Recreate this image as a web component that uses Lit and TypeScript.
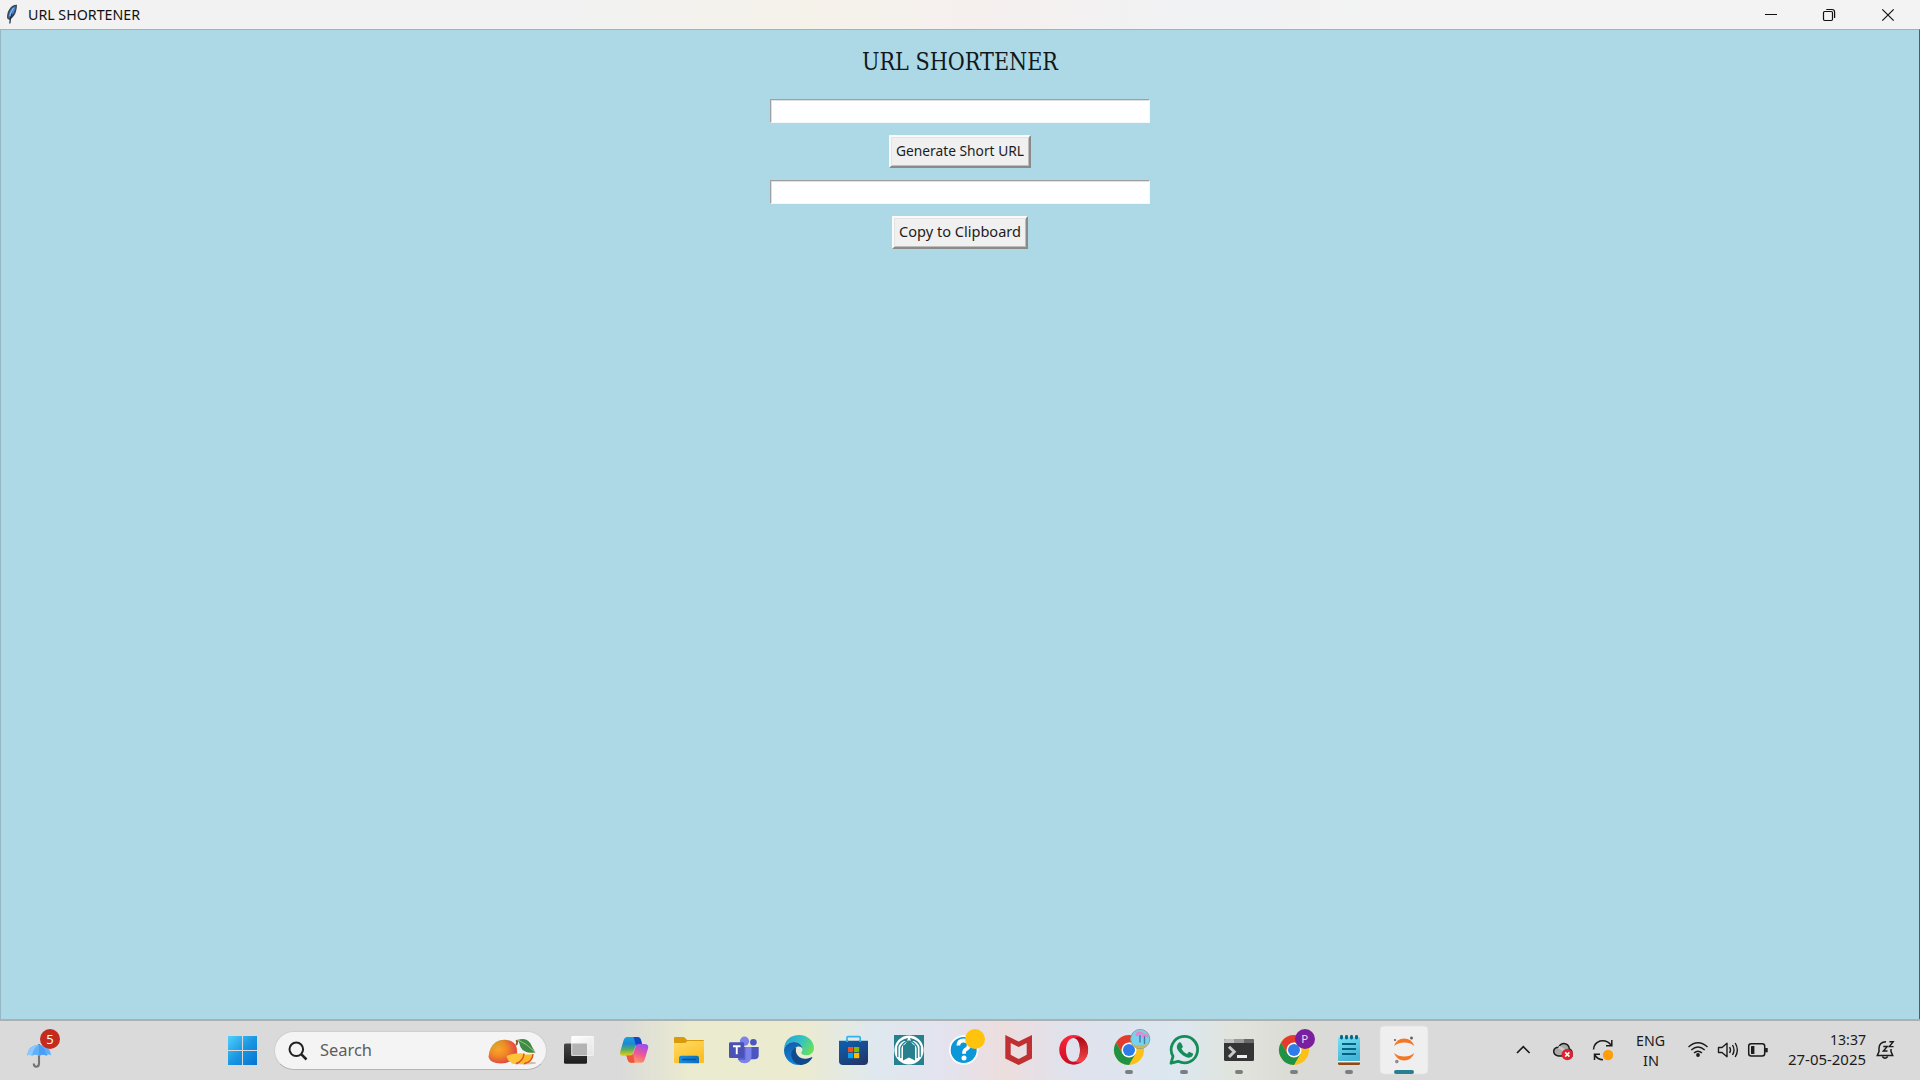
import { LitElement, html, css, svg } from "lit";
import { customElement, property } from "lit/decorators.js";

/** A single line of text that is condensed or stretched to a given width. */
@customElement("fit-label")
class FitLabel extends LitElement {
  @property({ type: Number }) width = 0;
  static styles = css`
    :host { display: block; white-space: nowrap; }
    .text { display: inline-block; transform-origin: 0 50%; }
  `;
  updated() {
    this.style.width = this.width + "px";
    const el = this.renderRoot.querySelector(".text") as HTMLElement;
    el.style.transform = "none";
    const natural = el.getBoundingClientRect().width;
    if (natural > 0) el.style.transform = `scaleX(${this.width / natural})`;
  }
  render() {
    return html`<span class="text"><slot></slot></span>`;
  }
}

const chrome = svg`
  <circle cx="28" cy="30" r="15" fill="#fbc116"/>
  <path d="M28 30 L15 22.5 A15 15 0 0 1 41 22.5 L28 22.5 Z" fill="#e33b2e"/>
  <path d="M15 22.5 L21.5 33.7 L28 30 L28 22.5 Z" fill="#e33b2e"/>
  <path d="M15 22.5 A15 15 0 0 0 28 45 L34.5 33.7 L28 36 L21.5 33.7 Z" fill="#1f9246"/>
  <circle cx="28" cy="30" r="7.5" fill="#fff"/><circle cx="28" cy="30" r="6" fill="#2e7bea"/>`;
const running = svg`<rect x="24" y="50" width="8" height="4" rx="2" fill="#7c7f81"/>`;

const apps = [
  // task view
  svg`<rect x="13" y="23.5" width="23" height="20.3" rx="1.5" fill="url(#tv1)"/>
    <rect x="20.3" y="16" width="22.5" height="20" rx="1.2" fill="url(#tv2)"/>
    <rect x="20.3" y="23.5" width="15.7" height="12.5" fill="#adadad" opacity=".9"/>
    <rect x="20.8" y="16.5" width="21.5" height="19" rx="1" fill="none" stroke="#fff" stroke-opacity=".5"/>
    <defs><linearGradient id="tv1" x2="0" y2="1"><stop stop-color="#484848"/><stop offset="1" stop-color="#1c1c1c"/></linearGradient>
    <linearGradient id="tv2" x2="1" y2="1"><stop stop-color="#fff"/><stop offset="1" stop-color="#e4e4e4"/></linearGradient></defs>`,
  // copilot
  svg`<path d="M21 17 H31.5 Q34 17 35 20 L36 24 H33 Q30 24 29 27.5 L26.5 34 Q25.5 36 23 36 H18 Q13 36 14.3 31.5 L17.5 20.5 Q18.6 17 21 17 Z" fill="url(#cp1)"/>
    <path d="M35.3 42.7 H25 Q22.5 42.7 21.5 39.5 L20.4 35.6 H24 Q26.7 35.6 27.7 32 L29.8 26 Q30.6 24 33 24 H38.3 Q43.3 24 42 28.5 L38.8 39.2 Q37.7 42.7 35.3 42.7 Z" fill="url(#cp2)"/>
    <path d="M27.5 17 H31.5 Q34 17 35 20 L36 24 H33 Q31 24 30 25.5 Z" fill="#1447c8"/>
    <path d="M28.8 42.7 H25 Q22.5 42.7 21.5 39.5 L20.4 35.6 H24 Q26 35.6 27 34 Z" fill="#ee573c"/>
    <defs><linearGradient id="cp1" x2="0" y2="1"><stop stop-color="#12a5e4"/><stop offset=".35" stop-color="#1e88d4"/><stop offset=".65" stop-color="#53ad63"/><stop offset="1" stop-color="#f5cf12"/></linearGradient>
    <linearGradient id="cp2" x1=".7" x2=".3" y2="1"><stop stop-color="#9a50ee"/><stop offset=".5" stop-color="#ee5795"/><stop offset="1" stop-color="#ffa25c"/></linearGradient></defs>`,
  // file explorer
  svg`<path d="M13 18.3 Q13 17 14.3 17 H22 Q23.3 17 24.2 18 L26 20 H42 Q43 20 43 21 V26 H13 Z" fill="#d99a0b"/>
    <path d="M13 23 H23 Q24.6 23 25.6 22 L26.4 21 H43 V42 Q43 43 42 43 H14 Q13 43 13 42 Z" fill="url(#fe1)"/>
    <path d="M18 43.3 V38 Q18 35.7 20.3 35.7 H35.7 Q38 35.7 38 38 V43.3 Z" fill="url(#fe2)"/>
    <rect x="21" y="38.8" width="14" height="1.5" rx=".7" fill="#0b4f8e"/>
    <defs><linearGradient id="fe1" x2=".5" y2="1"><stop stop-color="#ffdc66"/><stop offset="1" stop-color="#fdbd23"/></linearGradient>
    <linearGradient id="fe2" x2="1"><stop stop-color="#178ee0"/><stop offset="1" stop-color="#0f6dbd"/></linearGradient></defs>`,
  // teams
  svg`<circle cx="37.4" cy="22.3" r="3.3" fill="#4d55c0"/><path d="M34 27 H42.7 V35 Q42.7 39.3 38.5 39.3 H34 Z" fill="#4d55c0"/>
    <circle cx="28.5" cy="21.2" r="4.6" fill="#7b83eb"/><path d="M21.5 27 H35.5 V36 Q35.5 43.3 28.5 43.3 Q21.5 43.3 21.5 36 Z" fill="#7b83eb"/>
    <path d="M21.5 27 H29.5 V39 Q29.5 40 28.5 40 H22.5 Z" fill="#5b62cf"/>
    <rect x="13" y="22.2" width="15.2" height="15.8" rx="1.3" fill="#4a52b5"/>
    <path d="M17 26.3 H24.5 M20.75 26.3 V34.3" stroke="#fff" stroke-width="1.9" fill="none"/>`,
  // edge
  svg`<path d="M13 30 C13 20 20 15 28 15 C37 15 43 21.5 43 28 C43 32.5 39.5 35.3 35.5 35.3 C32 35.3 30.3 34 30.3 33 C30.3 32 31.5 31.5 31.5 29 C31.5 25.5 28 22 23 22 C17.5 22 14 25.5 13 30 Z" fill="url(#ed1)"/>
    <path d="M13 30 C14 25 18 22 23 22 C28 22 31.5 25.5 31.5 29 C30.5 27 28.8 26.4 27 26.6 C23 27.5 21 31 21.5 35 C22 40 25.5 44 29 45 C20 45.5 13 39 13 30 Z" fill="url(#ed2)"/>
    <path d="M25.2 27.4 C24 31 25.5 38 33.5 38.7 C37 39 39.5 37.7 41 37 Q41.6 37 41.2 38 C38.5 42.5 34 45 29 45 C24.5 44.5 20 39.5 20.3 34 C20.5 31 22.5 28 25.2 27.4 Z" fill="#114a8b"/>
    <defs><linearGradient id="ed1" y1=".2" x2="1" y2=".6"><stop stop-color="#22a4dc"/><stop offset=".5" stop-color="#32c1c5"/><stop offset="1" stop-color="#69e05a"/></linearGradient>
    <linearGradient id="ed2" x2=".3" y2="1"><stop stop-color="#0f5ba5"/><stop offset="1" stop-color="#1283da"/></linearGradient></defs>`,
  // store
  svg`<path d="M21 23 V17.6 Q21 16.6 22 16.6 H33.2 Q34.2 16.6 34.2 17.6 V23" fill="none" stroke="#2fb4f0" stroke-width="1.7"/>
    <path d="M13 20.7 H42 V41 Q42 45 38 45 H17 Q13 45 13 41 Z" fill="url(#st1)"/>
    <path d="M21 20.7 V22 M34.2 20.7 V22" stroke="#2fb4f0" stroke-width="1.7"/>
    <rect x="22" y="27" width="5.2" height="5.2" fill="#f25022"/><rect x="28" y="27" width="5.2" height="5.2" fill="#7fba00"/>
    <rect x="22" y="33" width="5.2" height="5.2" fill="#00a4ef"/><rect x="28" y="33" width="5.2" height="5.2" fill="#ffb900"/>
    <defs><linearGradient id="st1" x2=".6" y2="1"><stop stop-color="#0b62b3"/><stop offset="1" stop-color="#21386f"/></linearGradient></defs>`,
  // arch emblem
  svg`<rect x="13" y="15" width="30" height="30" fill="#26808e"/><circle cx="28" cy="30" r="14.6" fill="#fff"/>
    <path d="M22 40.5 V25.5 Q25 24.5 26.5 20.5 H29.5 Q31 24.5 34 25.5 V40.5 L28 37.5 Z" fill="#26808e"/>
    <path d="M16.8 37 V26.5 Q18.5 21 26 19 L25.3 21.5 Q20.5 24.5 19.8 28 V38 M39.2 37 V26.5 Q37.5 21 30 19 L30.7 21.5 Q35.5 24.5 36.2 28 V38" fill="none" stroke="#26808e" stroke-width="1.3"/>`,
  // help
  svg`<circle cx="27.7" cy="30" r="14.7" fill="#fff"/><circle cx="27.7" cy="30" r="13" fill="#0b97d8"/>
    <path d="M22.3 25.5 Q22.5 20.5 27.5 20.5 Q32.8 20.5 32.8 25 Q32.8 28 29.6 29.6 Q28 30.5 28 33.8" fill="none" stroke="#fff" stroke-width="3.8"/>
    <circle cx="28" cy="38" r="2.5" fill="#fff"/><circle cx="39" cy="19" r="10" fill="#ffc20d"/>`,
  // shield
  svg`<path d="M14.3 15 L27.7 21.5 L41 15 V38.5 L27.7 45 L14.3 38.5 Z M19.7 23 V34.8 L27.7 39 L35.7 34.8 V23 L27.7 27 Z" fill="#c02f31" fill-rule="evenodd"/>`,
  // opera
  svg`<path d="M27.7 15 A14.4 14.8 0 1 0 27.7 44.7 A14.4 14.8 0 1 0 27.7 15 Z M27.7 18 C31.5 18 34 23 34 30 C34 37 31.5 41.8 27.7 41.8 C23 41.8 20 37 20 30 C20 23 23 18 27.7 18 Z" fill="url(#op1)" fill-rule="evenodd"/>
    <path d="M27.7 18 C32 16.5 36 17.5 38 19.5 C43.4 25 43.4 35 38 40.5 C36 42.5 31.5 43 27.7 41.8 C31.5 41.8 34 37 34 30 C34 23 31.5 18 27.7 18 Z" fill="url(#op2)"/>
    <defs><linearGradient id="op1" x2="0" y2="1"><stop stop-color="#ff2638"/><stop offset="1" stop-color="#c80d25"/></linearGradient>
    <linearGradient id="op2" x2="0" y2="1"><stop stop-color="#a90a18"/><stop offset="1" stop-color="#f8474b"/></linearGradient></defs>`,
  // chrome, first profile
  svg`${chrome}<circle cx="39.2" cy="19" r="9.6" fill="#79d1ee" stroke="#8a9a88" stroke-width=".9"/>
    <path d="M31 24.5 Q39 26 47.4 24 Q44.5 28.3 39 28.3 Q33.5 28.3 31 24.5 Z" fill="#c3b963"/>
    <path d="M39 15 V22.5 M43.5 16 V24" stroke="#427ba6" stroke-width="1.4"/>
    <path d="M34.3 14.5 Q36 10.3 39.5 11.8 Q42.5 12 43 14.5 L39 14.2 L35.5 16.5 Z M40.5 16.5 Q42.5 12.3 45.5 14 Q47.5 15 47.3 18 L44 16 L41 18 Z" fill="#ef7fd0"/>${running}`,
  // whatsapp
  svg`<path d="M15 43.2 L17 36.3 A13.2 13.2 0 1 1 22.2 41.3 Z" fill="none" stroke="#168c58" stroke-width="2.8" stroke-linejoin="round"/>
    <path d="M22 23.4 Q23.6 21.6 25 22.7 L26.8 26.2 Q27 27.2 25.4 28.8 Q27.3 32.4 31 34 L33 31.8 L37 33.6 Q37.3 35 36 36.6 Q33.5 38.7 29.4 36.8 Q23.5 34 21 28.6 Q20.2 25.6 22 23.4 Z" fill="#168c58"/>${running}`,
  // terminal
  svg`<rect x="13" y="19" width="30" height="22" rx="1.5" fill="#353535"/>
    <path d="M14.5 19 H23 V23 H13 V20.5 Q13 19 14.5 19 Z" fill="#c2c2c2"/><rect x="23" y="19" width="10" height="4" fill="#999"/>
    <path d="M33 19 H41.5 Q43 19 43 20.5 V23 H33 Z" fill="#686868"/>
    <path d="M18 26.7 L23.2 31.8 L18 37" fill="none" stroke="#c9c9c9" stroke-width="3"/><rect x="26" y="35" width="10" height="3" fill="#eee"/>${running}`,
  // chrome, second profile
  svg`${chrome}<circle cx="39" cy="19" r="10" fill="#7a1fa0"/>
    <text x="38.8" y="23" text-anchor="middle" font-size="11.5" fill="#eadcf2">P</text>${running}`,
  // notepad
  svg`<path d="M17 40 H39 V43.5 Q39 45 37.5 45 H18.5 Q17 45 17 43.5 Z" fill="#8d4a15"/><rect x="17" y="40" width="22" height="2.4" fill="#fff"/>
    <path d="M17 18.5 Q17 17.3 18.2 17.3 H37.8 Q39 17.3 39 18.5 V41 H17 Z" fill="url(#np1)"/>
    <path d="M21 24 H35 M21 29 H35 M21 34 H35" stroke="#03637f" stroke-width="1.8"/>
    <g fill="#036683"><rect x="19" y="15" width="3" height="4.4" rx="1.4"/><rect x="24" y="15" width="3" height="4.4" rx="1.4"/><rect x="29" y="15" width="3" height="4.4" rx="1.4"/><rect x="34" y="15" width="3" height="4.4" rx="1.4"/></g>
    ${running}<defs><linearGradient id="np1" x2=".4" y2="1"><stop stop-color="#79e0f4"/><stop offset="1" stop-color="#43b5d8"/></linearGradient></defs>`,
  // jupyter
  svg`<rect x="4" y="6" width="48" height="48" rx="4" fill="#efefef" stroke="#e2e2e2" stroke-width=".8"/>
    <path d="M18 26 Q21 18.6 28.2 18.6 Q35.3 18.6 38.4 26 Q34 22.6 28.2 22.6 Q22.5 22.6 18 26 Z M18 33 Q21 40.4 28.2 40.4 Q35.3 40.4 38.4 33 Q34 36.6 28.2 36.6 Q22.5 36.6 18 33 Z" fill="#f37726"/>
    <circle cx="35.5" cy="18" r="1.5" fill="#616262"/><circle cx="19" cy="20" r="1.1" fill="#616262"/><circle cx="20.8" cy="41.6" r="1.8" fill="#8c8c8c"/>
    <rect x="18" y="50" width="20" height="4" rx="2" fill="#27808f"/>`,
];

@customElement("app-root")
class AppRoot extends LitElement {
  static styles = css`
    :host { display: block; width: 1920px; height: 1080px; overflow: hidden;
      font-family: "Noto Sans", "Open Sans", sans-serif; color: #111; }
    * { box-sizing: border-box; }
    svg { display: block; flex: none; }
    .screen { display: flex; flex-direction: column; height: 1080px; }
    .titlebar { height: 29px; flex: none; display: flex; align-items: center;
      background: linear-gradient(90deg, #f2f2f2 30%, #f5f2ea 42%, #f5f0ef 52%, #f1f2f4 62%, #f3f3f3 72%); }
    .feather { margin-left: 5px; margin-right: 10px; }
    .caption { font-size: 15px; line-height: 26px; height: 28px; }
    .controls { margin-left: auto; }
    .window { flex: 1; background: #add8e6; border: 1px solid #93b7c3; border-right-color: #47606a; border-bottom: 0;
      display: flex; flex-direction: column; align-items: center; gap: 12px; }
    .heading { height: 57px; padding-top: 12px; margin-right: 1px; font: 24.5px/39px "DejaVu Serif Condensed", "DejaVu Serif", serif; color: #10181b; }
    .entry { width: 380px; height: 24px; background: #fff; border: 1px solid #a0a0a0; border-right-color: #f4f8fa;
      border-bottom-color: #f4f8fa; box-shadow: inset 1px 1px #dfdfdf; }
    .button { height: 33px; padding: 0 5px; background: #f0f0f0; border: 2px solid; border-color: #fafafa #8a8a8a #8a8a8a #fafafa;
      box-shadow: inset 1px 1px #e3e3e3, inset -1px -1px #bdbdbd; font: 15px/27px "Noto Sans", sans-serif; color: #1c1c1c; }
    .button.generate { margin-right: 1px; }
    .taskbar { height: 61px; flex: none; border-top: 2px solid #acb0b1; display: flex; align-items: center;
      background: linear-gradient(90deg, #dadada 620px, #ebebcf 690px, #ecebcf 800px, #dfe8ee 872px, #e3e3ee 945px,
        #eddddd 1004px, #e0e2ec 1065px, #dce7f0 1180px, #e1e4dc 1235px, #dbdad6 1300px, #dadada 1350px); }
    .weather { margin-left: 24px; margin-right: 142px; margin-top: -2px; position: relative; }
    .weather .count { position: absolute; left: 16px; top: -2px; width: 20px; height: 20px; border-radius: 50%;
      background: #c42b1c; color: #fff; font-size: 13px; line-height: 20px; text-align: center; }
    .start { margin-right: 18px; }
    .search { width: 273px; height: 39px; margin-left: -1px; margin-right: 4px; border-radius: 20px; background: #f4f4f4; border: 1px solid #cfcfcf;
      border-bottom-color: #b4b4b4; display: flex; align-items: center; padding: 0 10px 0 13px; }
    .search fit-label { font-size: 17px; line-height: 34px; height: 36px; color: #5d5d5d; margin-left: 12px; margin-right: auto; }
    .apps { display: flex; margin-top: -1px; }
    .tray { margin-left: auto; display: flex; align-items: center; height: 59px; }
    .lines { font-size: 15px; line-height: 20px; color: #1b1b1b; display: flex; flex-direction: column; padding-bottom: 3px; }
    .lang { align-items: center; margin-left: 23px; margin-right: 22px; padding-bottom: 2px; }
    .clock { align-items: flex-end; margin-left: 19px; margin-right: 10px; }
    .bell { margin-right: 24px; }
  `;

  render() {
    return html`<div class="screen">
      <header class="titlebar">
        <svg class="feather" width="13" height="21" viewBox="0 0 13 21">
          <path d="M12 .8 Q7.5.5 4.5 5 Q1.5 9 2.2 14.5 L4.5 16 Q9.5 13 11 7.5 Q12 4 12 .8 Z" fill="#39424d"/>
          <path d="M10.5 2 Q7 3 5.2 6.5 Q3.2 10 3.4 14 L5 13.5 Q8.5 10.5 9.6 7 Q10.6 4.5 10.5 2 Z" fill="#4584d6"/>
          <path d="M7 9.5 Q5 14 4.8 19.5" fill="none" stroke="#283346" stroke-width="1.3"/>
          <path d="M8.5 4 Q5.8 7.5 4.8 12" fill="none" stroke="#9cc4f2" stroke-width="1"/>
        </svg>
        <fit-label class="caption" width="112">URL SHORTENER</fit-label>
        <svg class="controls" width="170" height="28" viewBox="1750 0 170 28" fill="none" stroke="#111">
          <path d="M1765 13.5 H1777"/>
          <rect x="1823.5" y="10.5" width="9" height="9" rx="1.2" stroke-width="1.2"/>
          <path d="M1826.3 8.5 H1832 Q1834.6 8.5 1834.6 11.2 V17" stroke-width="1.2"/>
          <path d="M1882.3 8.3 L1893.7 19.7 M1893.7 8.3 L1882.3 19.7" stroke-width="1.2"/>
        </svg>
      </header>
      <main class="window">
        <div class="heading"><fit-label width="196">URL SHORTENER</fit-label></div>
        <div class="entry"></div>
        <div class="button generate"><fit-label width="128">Generate Short URL</fit-label></div>
        <div class="entry"></div>
        <div class="button"><fit-label width="122">Copy to Clipboard</fit-label></div>
      </main>
      <footer class="taskbar">
        <div class="weather">
          <svg width="38" height="38" viewBox="24 1028 38 38">
            <path d="M39 1041 V1060.5 Q39 1063.7 36.3 1063.7 Q33.8 1063.7 33.8 1060.5" fill="none" stroke="#747474" stroke-width="2.1"/>
            <path d="M27 1052.5 Q28.5 1042 39 1041.5 Q49.5 1042 51.3 1052.5 Q48.5 1050.5 46.5 1052.8 Q43 1050.5 39 1053 Q35.5 1050.5 32 1052.8 Q29.5 1050.8 27 1052.5 Z" fill="#5eb0fb"/>
            <path d="M27 1052.5 Q28.5 1042 39 1041.5 Q33.5 1044.5 32 1052.8 Q29.5 1050.8 27 1052.5 Z" fill="#8bc8fe"/>
            <path d="M39 1041.5 Q46 1045 46.5 1052.8 Q43 1050.5 39 1053 Z" fill="#4a9ff4"/>
          </svg>
          <span class="count">5</span>
        </div>
        <svg class="start" width="53" height="30" viewBox="204 1036 53 30">
          <defs><linearGradient id="w" gradientUnits="userSpaceOnUse" x1="228" y1="1036" x2="257" y2="1065">
            <stop stop-color="#4fd0fd"/><stop offset=".5" stop-color="#1b96e2"/><stop offset="1" stop-color="#0474d3"/></linearGradient></defs>
          <path d="M228 1036 H242 V1050 H228 Z M243 1036 H257 V1050 H243 Z M228 1051 H242 V1065 H228 Z M243 1051 H257 V1065 H243 Z" fill="url(#w)"/>
        </svg>
        <div class="search">
          <svg width="20" height="20" viewBox="0 0 20 20" fill="none" stroke="#222">
            <circle cx="8.3" cy="8.3" r="6.8" stroke-width="2"/><path d="M13.2 13.2 L18.5 18.5" stroke-width="2.5"/></svg>
          <fit-label width="52">Search</fit-label>
          <svg width="50" height="28" viewBox="486 1037 50 28">
            <defs><radialGradient id="mg" cx=".35" cy=".4" r=".75"><stop stop-color="#f9a52a"/><stop offset=".4" stop-color="#f08a24"/><stop offset=".8" stop-color="#e24a45"/><stop offset="1" stop-color="#d97a22"/></radialGradient>
            <linearGradient id="mg2" x2=".6" y2=".8"><stop stop-color="#a6bf2e"/><stop offset=".5" stop-color="#b9b52e" stop-opacity="0"/></linearGradient></defs>
            <ellipse cx="524" cy="1063" rx="13" ry="1.5" fill="#cdbfb0"/>
            <path d="M488.5 1057 Q489 1047 496 1042 Q503 1038 511 1041 Q518 1044 517 1054 Q513 1063 501 1063.5 Q490 1063 488.5 1057 Z" fill="url(#mg)"/>
            <path d="M488.5 1057 Q489 1047 496 1042 Q503 1038 511 1041 Q518 1044 517 1054 Q513 1063 501 1063.5 Q490 1063 488.5 1057 Z" fill="url(#mg2)"/>
            <path d="M516 1045 Q518 1043 516.5 1040" stroke="#8a5526" stroke-width="1.8" fill="none"/>
            <path d="M517.5 1040 Q526 1037 530.5 1043.5 Q532.5 1048 535.5 1052.5 Q524 1054 520.5 1047 Q519.5 1042.5 517.5 1040 Z" fill="#3f8a45"/>
            <path d="M518 1040 Q526 1043 535 1052" stroke="#9ccb86" stroke-width="1" fill="none"/>
            <path d="M520 1054 Q528 1055 533 1054 Q532 1063 520 1063.5 Z" fill="#ffb826"/>
            <path d="M506.5 1056 Q514 1052.5 524 1053.5 Q523 1062 514 1063.5 Q507.5 1062.5 506.5 1056 Z" fill="#ffc33a"/>
            <path d="M524 1053.5 Q523.5 1061 516 1063.7 M533 1054 Q532.5 1062 524 1063.7" stroke="#df5128" stroke-width="1.5" fill="none"/>
          </svg>
        </div>
        <div class="apps">${apps.map((a) => html`<svg width="55" height="60" viewBox="0 0 55 60">${a}</svg>`)}</div>
        <div class="tray">
          <svg width="98" height="59" viewBox="1515 1021 98 59" fill="none" stroke="#1b1b1b" stroke-width="1.5">
            <path d="M1517 1053 L1523.3 1046.7 L1529.6 1053" stroke-width="1.7"/>
            <path d="M1558.5 1056 Q1553.5 1055 1553.7 1051 Q1554.3 1047.5 1558.5 1047.3 Q1561 1043 1565 1043.7 Q1569 1044.5 1569.3 1049 Q1572 1050 1572 1053 V1056 Z" fill="#aaa"/>
            <path d="M1558.5 1047.3 Q1562 1048 1566.5 1053" stroke="#ccc" stroke-width="3"/>
            <circle cx="1567.3" cy="1054.5" r="5.7" fill="#dc2430" stroke="none"/>
            <path d="M1565.2 1052.4 L1569.4 1056.6 M1569.4 1052.4 L1565.2 1056.6" stroke="#fff"/>
            <path d="M1593.5 1049.5 Q1594 1043 1600 1041 Q1607 1039.5 1611.4 1045.5 M1611.8 1040 V1045.7 H1606"/>
            <path d="M1594.5 1060 V1054.3 H1600 M1594.8 1055 Q1597.5 1059.5 1603 1059.7"/>
            <circle cx="1608" cy="1055" r="5.2" fill="#ff9d0a" stroke="none"/>
          </svg>
          <div class="lines lang"><fit-label width="29">ENG</fit-label><fit-label width="16">IN</fit-label></div>
          <svg width="82" height="59" viewBox="1687 1021 82 59" fill="none" stroke="#1b1b1b" stroke-width="1.4">
            <path d="M1688.5 1047 Q1698 1038.5 1707.5 1047 M1691.3 1050 Q1698 1044 1704.7 1050 M1694 1053 Q1698 1049.3 1702 1053"/>
            <circle cx="1698" cy="1055" r="1.9" fill="#1b1b1b" stroke="none"/>
            <path d="M1718.5 1047.5 H1722 L1727 1043.3 V1056.7 L1722 1052.5 H1718.5 Z M1729.6 1047 Q1731.4 1050 1729.6 1053 M1732.5 1045 Q1735.5 1050 1732.5 1055 M1735.2 1043 Q1739.5 1050 1735.2 1057" stroke-linejoin="round"/>
            <rect x="1748.7" y="1043.7" width="16" height="12.4" rx="2.5" stroke-width="1.5"/>
            <rect x="1751" y="1046" width="3.4" height="8" rx=".6" fill="#1b1b1b" stroke="none"/><path d="M1766.4 1048 V1052.3" stroke-width="2.6"/>
          </svg>
          <div class="lines clock"><fit-label width="36">13:37</fit-label><fit-label width="78">27-05-2025</fit-label></div>
          <svg class="bell" width="20" height="59" viewBox="1876 1021 20 59" fill="none" stroke="#1b1b1b" stroke-width="1.5">
            <path d="M1886 1041.7 Q1879.3 1042 1879 1048 V1051.5 L1877.3 1055.5 H1892.7 L1891 1051.5 V1049"/>
            <path d="M1882.3 1056.5 Q1885 1060 1887.7 1056.5"/>
            <path d="M1883.3 1046.5 H1887.3 L1883.3 1051 H1887.5 M1889.4 1041.7 H1893.2 L1889.4 1046.6 H1893.6" stroke-width="1.4"/>
          </svg>
        </div>
      </footer>
    </div>`;
  }
}
